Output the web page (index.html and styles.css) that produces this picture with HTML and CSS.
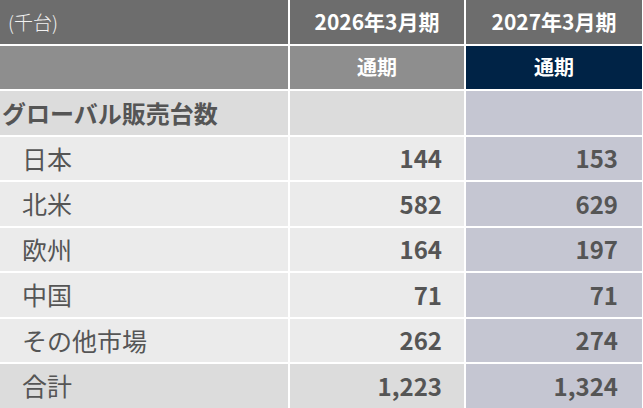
FILE: index.html
```html
<!DOCTYPE html>
<html lang="ja">
<head>
<meta charset="utf-8">
<link rel="stylesheet" href="styles.css">
</head>
<body>
<div class="table">
  <div class="cell head unit">(千台)</div>
  <div class="cell head center">2026年3月期</div>
  <div class="cell head center">2027年3月期</div>

  <div class="cell sub"></div>
  <div class="cell sub center">通期</div>
  <div class="cell sub navy center">通期</div>

  <div class="cell mid section">グローバル販売台数</div>
  <div class="cell mid"></div>
  <div class="cell lav"></div>

  <div class="cell light label">日本</div>
  <div class="cell light num c2">144</div>
  <div class="cell lav num c3">153</div>

  <div class="cell light label">北米</div>
  <div class="cell light num c2">582</div>
  <div class="cell lav num c3">629</div>

  <div class="cell light label">欧州</div>
  <div class="cell light num c2">164</div>
  <div class="cell lav num c3">197</div>

  <div class="cell light label">中国</div>
  <div class="cell light num c2">71</div>
  <div class="cell lav num c3">71</div>

  <div class="cell light label">その他市場</div>
  <div class="cell light num c2">262</div>
  <div class="cell lav num c3">274</div>

  <div class="cell mid label">合計</div>
  <div class="cell mid num c2">1,223</div>
  <div class="cell lav num c3">1,324</div>
</div>
</body>
</html>
```
FILE: styles.css
```css
html, body {
  margin: 0;
  padding: 0;
  background: #ffffff;
}
body {
  font-family: "Noto Sans CJK JP", "Noto Sans", sans-serif;
  color: #555555;
  overflow: hidden;
}
.table {
  display: grid;
  grid-template-columns: 288px 174px 176px;
  grid-template-rows: repeat(9, 43.5px);
  gap: 2px;
  width: 642px;
  height: 408px;
}
.cell {
  display: flex;
  align-items: center;
  line-height: 1;
  white-space: nowrap;
}
.center {
  justify-content: center;
}
.head {
  background: #6d6d6d;
  color: #ffffff;
  font-weight: 700;
  font-size: 21px;
}
.head.unit {
  font-weight: 300;
  font-size: 19px;
  padding-left: 8px;
  color: #f2f2f2;
}
.sub {
  background: #8e8e8e;
  color: #ffffff;
  font-weight: 700;
  font-size: 20px;
}
.sub.navy {
  background: #002346;
}
.mid {
  background: #dcdcdc;
}
.light {
  background: #ebebeb;
}
.lav {
  background: #c5c6d2;
}
.section {
  font-weight: 700;
  font-size: 24px;
  padding-left: 2px;
}
.label {
  font-size: 25px;
  padding-left: 22px;
}
.num {
  justify-content: flex-end;
  font-weight: 700;
  font-size: 24px;
}
.c2 {
  padding-right: 22px;
}
.c3 {
  padding-right: 24px;
}
```
